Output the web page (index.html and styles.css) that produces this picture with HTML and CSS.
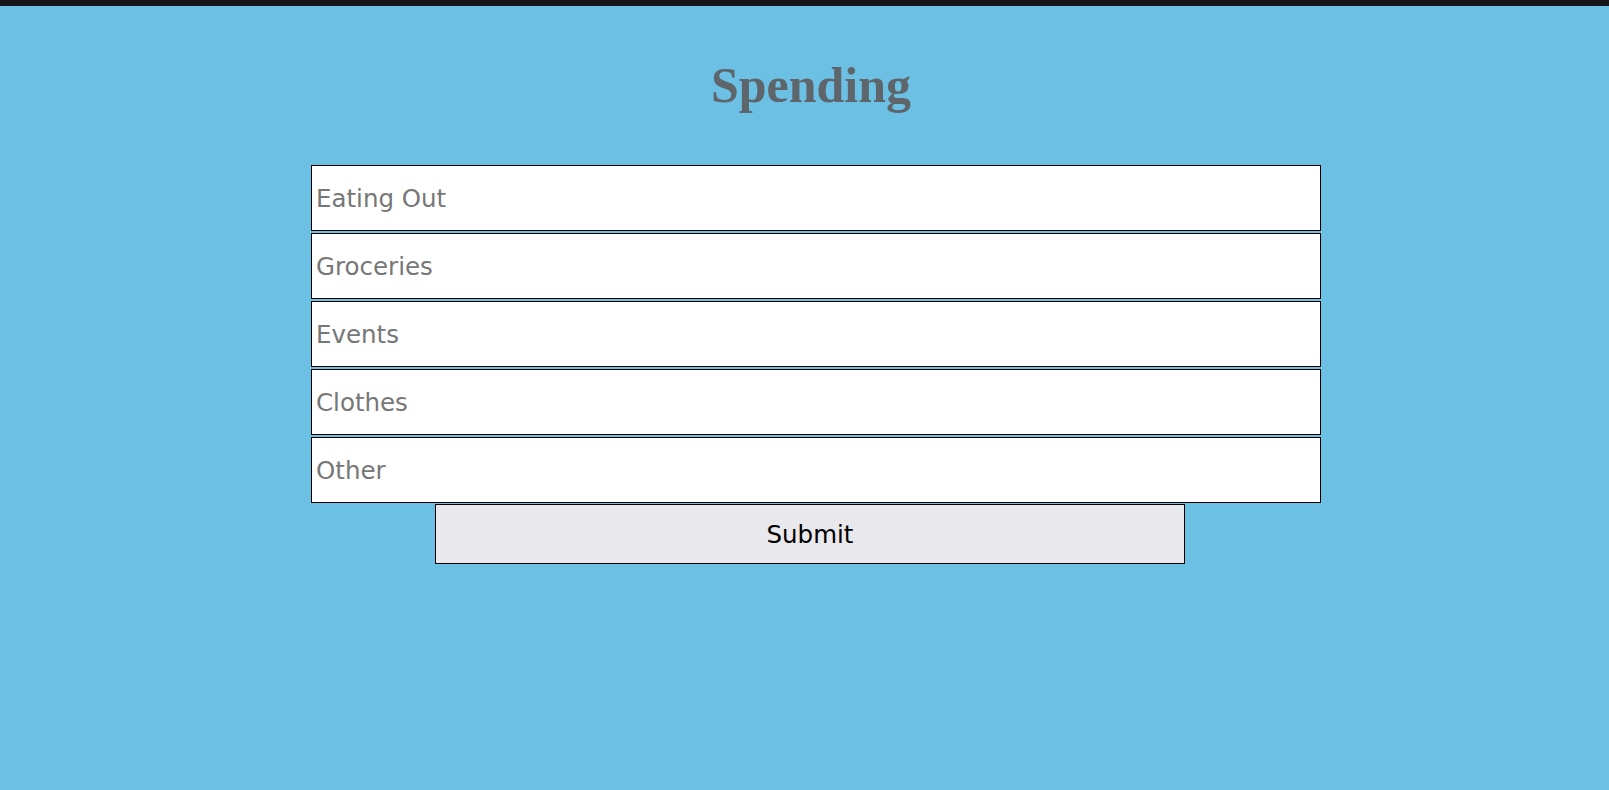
FILE: index.html
```html
<!DOCTYPE html>
<html lang="en">
<head>
<meta charset="utf-8">
<title>Spending</title>
<link rel="stylesheet" href="styles.css">
</head>
<body>
<div class="topbar"></div>
<main class="page">
  <h1 class="title">Spending</h1>
  <form class="form">
    <div class="field">Eating Out</div>
    <div class="field">Groceries</div>
    <div class="field">Events</div>
    <div class="field">Clothes</div>
    <div class="field">Other</div>
    <button type="button" class="submit">Submit</button>
  </form>
</main>
</body>
</html>
```

FILE: styles.css
```css
html, body {
  margin: 0;
  padding: 0;
}
body {
  background: #6bc0e3;
  min-height: 790px;
  font-family: "DejaVu Sans", Inter, sans-serif;
}
.topbar {
  height: 6px;
  background: #141618;
}
.page {
  display: flex;
  flex-direction: column;
}
.title {
  margin: 51px 0 0 0;
  padding-left: 13px;
  font-family: "Liberation Serif", "Times New Roman", serif;
  font-weight: bold;
  font-size: 50px;
  line-height: 56px;
  color: #5e666c;
  text-align: center;
}
.form {
  width: 1010px;
  margin: 52px 0 0 311px;
  display: flex;
  flex-direction: column;
  gap: 2px;
}
.field {
  box-sizing: border-box;
  height: 66px;
  border: 1px solid #000;
  background: #fff;
  padding-left: 4px;
  display: flex;
  align-items: center;
  font-size: 24.5px;
  color: #777777;
}
.submit {
  box-sizing: border-box;
  width: 750px;
  height: 60px;
  margin: -1px 0 0 124px;
  border: 1px solid #000;
  border-radius: 0;
  background: #e9e8ed;
  font-family: "DejaVu Sans", Inter, sans-serif;
  font-size: 24.5px;
  color: #000;
  padding: 0;
}
```
